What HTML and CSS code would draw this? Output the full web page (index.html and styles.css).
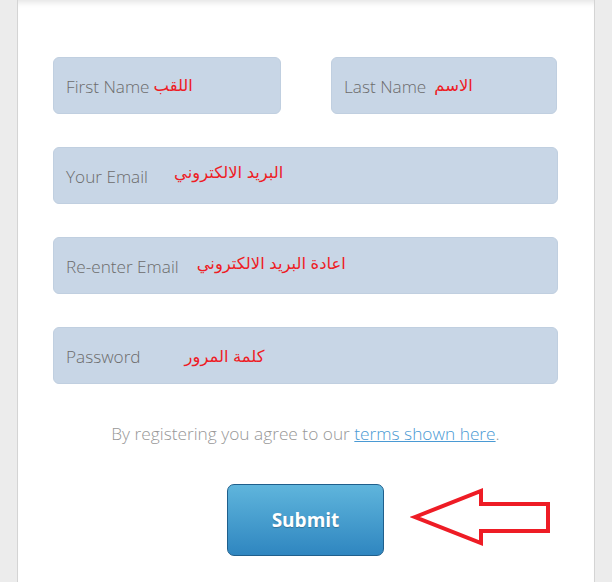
FILE: index.html
```html
<!DOCTYPE html>
<html lang="en">
<head>
<meta charset="utf-8">
<title>Register</title>
<link rel="stylesheet" href="styles.css">
</head>
<body>
<div class="page">
  <div class="panel">
    <form class="form">
      <div class="row-two">
        <div class="field"><span class="ph">First Name</span><span class="ar ar-first" dir="rtl">اللقب</span></div>
        <div class="field"><span class="ph">Last Name</span><span class="ar ar-last" dir="rtl">الاسم</span></div>
      </div>
      <div class="field"><span class="ph">Your Email</span><span class="ar ar-email" dir="rtl">البريد الالكتروني</span></div>
      <div class="field"><span class="ph">Re-enter Email</span><span class="ar ar-reenter" dir="rtl">اعادة البريد الالكتروني</span></div>
      <div class="field"><span class="ph">Password</span><span class="ar ar-pass" dir="rtl">كلمة المرور</span></div>
      <p class="terms">By registering you agree to our <a href="#" class="terms-link">terms shown here</a>.</p>
      <div class="actions">
        <button type="button" class="submit">Submit</button>
      </div>
    </form>
    <svg class="arrow" width="150" height="64" viewBox="0 0 150 64">
      <polygon points="5,29 71,3 71,16 138,16 138,43 71,43 71,55" fill="none" stroke="#ee1c25" stroke-width="4" stroke-linejoin="miter"/>
    </svg>
  </div>
</div>
</body>
</html>
```
FILE: styles.css
```css
html, body {
  margin: 0;
  padding: 0;
}
body {
  background: #ececec;
  font-family: "Open Sans", "Liberation Sans", sans-serif;
  width: 612px;
  height: 582px;
  overflow: hidden;
}
.page {
  padding: 0 17px 0 17px;
  height: 582px;
}
.panel {
  position: relative;
  background: #fff;
  border-left: 1px solid #d4d4d4;
  border-right: 1px solid #d4d4d4;
  height: 582px;
  box-shadow: inset 0 7px 6px -5px rgba(0,0,0,0.12);
  box-sizing: border-box;
  padding: 57px 36px 0 35px;
}
.form {
  display: flex;
  flex-direction: column;
  gap: 33px;
  margin: 0;
}
.row-two {
  display: grid;
  grid-template-columns: 228px 226px;
  column-gap: 50px;
}
.field {
  height: 57px;
  box-sizing: border-box;
  background: #c8d6e6;
  border: 1px solid #c0cfe0;
  border-radius: 6px;
  display: flex;
  align-items: center;
  padding: 2px 0 0 12px;
}
.ph {
  font-size: 17.2px;
  font-weight: 300;
  color: #6c6c6c;
  line-height: 20px;
}
.ar {
  font-family: "Liberation Sans", "DejaVu Sans", sans-serif;
  font-size: 16.4px;
  color: #ee1c25;
  line-height: 20px;
  margin-bottom: 8px;
}
.ar-first { margin-left: 4px; margin-bottom: 4px; }
.ar-last { margin-left: 8px; margin-bottom: 4px; }
.ar-email { margin-left: 26px; margin-bottom: 10px; }
.ar-reenter { margin-left: 18px; margin-bottom: 8px; }
.ar-pass { margin-left: 44px; margin-bottom: 2px; }
.terms {
  margin: 6px 0 0 0;
  text-align: center;
  font-size: 17.3px;
  font-weight: 300;
  color: #979797;
  line-height: 22px;
}
.terms-link {
  color: #4a9ad4;
  text-decoration: underline;
}
.actions {
  display: flex;
  justify-content: center;
  margin-top: 6px;
}
.submit {
  width: 157px;
  height: 72px;
  border: 1px solid #1f5f8c;
  border-radius: 7px;
  background: linear-gradient(#5fb5dc, #2f86c0);
  color: #fff;
  font-family: "Open Sans", "Liberation Sans", sans-serif;
  font-weight: 700;
  font-size: 19px;
  text-shadow: 0 1px 1px rgba(0,0,0,0.25);
  cursor: pointer;
  padding: 0;
}
.arrow {
  position: absolute;
  left: 392px;
  top: 488px;
}
```
